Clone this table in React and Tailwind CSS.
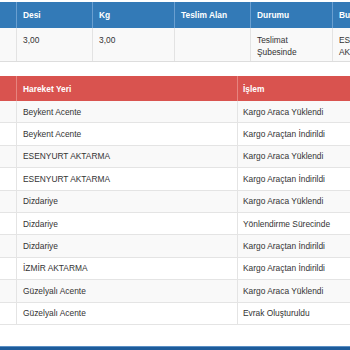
const topCols = [
  { w: 'w-[16px]', label: '' },
  { w: 'w-[76px]', label: 'Desi' },
  { w: 'w-[82px]', label: 'Kg' },
  { w: 'w-[76px]', label: 'Teslim Alan' },
  { w: 'w-[82px]', label: 'Durumu' },
  { w: 'w-[90px]', label: 'Bulunduğu Yer' },
];

const topRow = ['', '3,00', '3,00', '', 'Teslimat Şubesinde', 'ESENYURT AKTARMA'];

const moves = [
  ['Beykent Acente', 'Kargo Araca Yüklendi'],
  ['Beykent Acente', 'Kargo Araçtan İndirildi'],
  ['ESENYURT AKTARMA', 'Kargo Araca Yüklendi'],
  ['ESENYURT AKTARMA', 'Kargo Araçtan İndirildi'],
  ['Dizdariye', 'Kargo Araca Yüklendi'],
  ['Dizdariye', 'Yönlendirme Sürecinde'],
  ['Dizdariye', 'Kargo Araçtan İndirildi'],
  ['İZMİR AKTARMA', 'Kargo Araçtan İndirildi'],
  ['Güzelyalı Acente', 'Kargo Araca Yüklendi'],
  ['Güzelyalı Acente', 'Evrak Oluşturuldu'],
];

const App = () => {
  return (
    <div className="w-[350px] h-[350px] overflow-hidden bg-white flex flex-col text-[8.4px] leading-[12px] text-[#333]" style={{ fontFamily: '"Liberation Sans", Arial, sans-serif' }}>
      {/* kargo bilgileri */}
      <div className="mt-[2px] flex flex-col w-[422px] shrink-0">
        <div className="flex h-[26px] bg-[#337ab7] text-white font-bold">
          {topCols.map((c, i) => (
            <div key={i} className={`${c.w} shrink-0 flex items-center px-[6px] ${i > 0 ? 'border-l border-[#6a9fd0]' : ''}`}>
              {c.label}
            </div>
          ))}
        </div>
        <div className="flex h-[34px] bg-[#f9f9f9] border-b border-[#ddd]">
          {topCols.map((c, i) => (
            <div key={i} className={`${c.w} shrink-0 pt-[6px] px-[6px] ${i > 0 ? 'border-l border-[#e3e3e3]' : ''}`}>
              {topRow[i]}
            </div>
          ))}
        </div>
      </div>

      {/* hareketler */}
      <div className="mt-[14px] flex flex-col shrink-0">
        <div className="flex h-[25px] bg-[#d9534f] text-white font-bold">
          <div className="w-[16px] shrink-0" />
          <div className="w-[221px] shrink-0 flex items-center px-[6px] border-l border-[#e6847f]">Hareket Yeri</div>
          <div className="flex-1 flex items-center px-[5px] border-l border-[#e6847f]">İşlem</div>
        </div>
        {moves.map((m, i) => (
          <div key={i} className={`flex h-[22.4px] border-b border-[#e4e4e4] ${i % 2 === 0 ? 'bg-[#f9f9f9]' : 'bg-white'}`}>
            <div className="w-[16px] shrink-0" />
            <div className="w-[221px] shrink-0 flex items-center px-[6px] border-l border-[#e4e4e4]">{m[0]}</div>
            <div className="flex-1 flex items-center px-[5px] border-l border-[#e4e4e4]">{m[1]}</div>
          </div>
        ))}
      </div>

      <div className="flex-1" />
      <div className="h-[4px] shrink-0 bg-[#1d5c9b] border-t border-[#5b8fc4]" />
    </div>
  );
};

export default App;
